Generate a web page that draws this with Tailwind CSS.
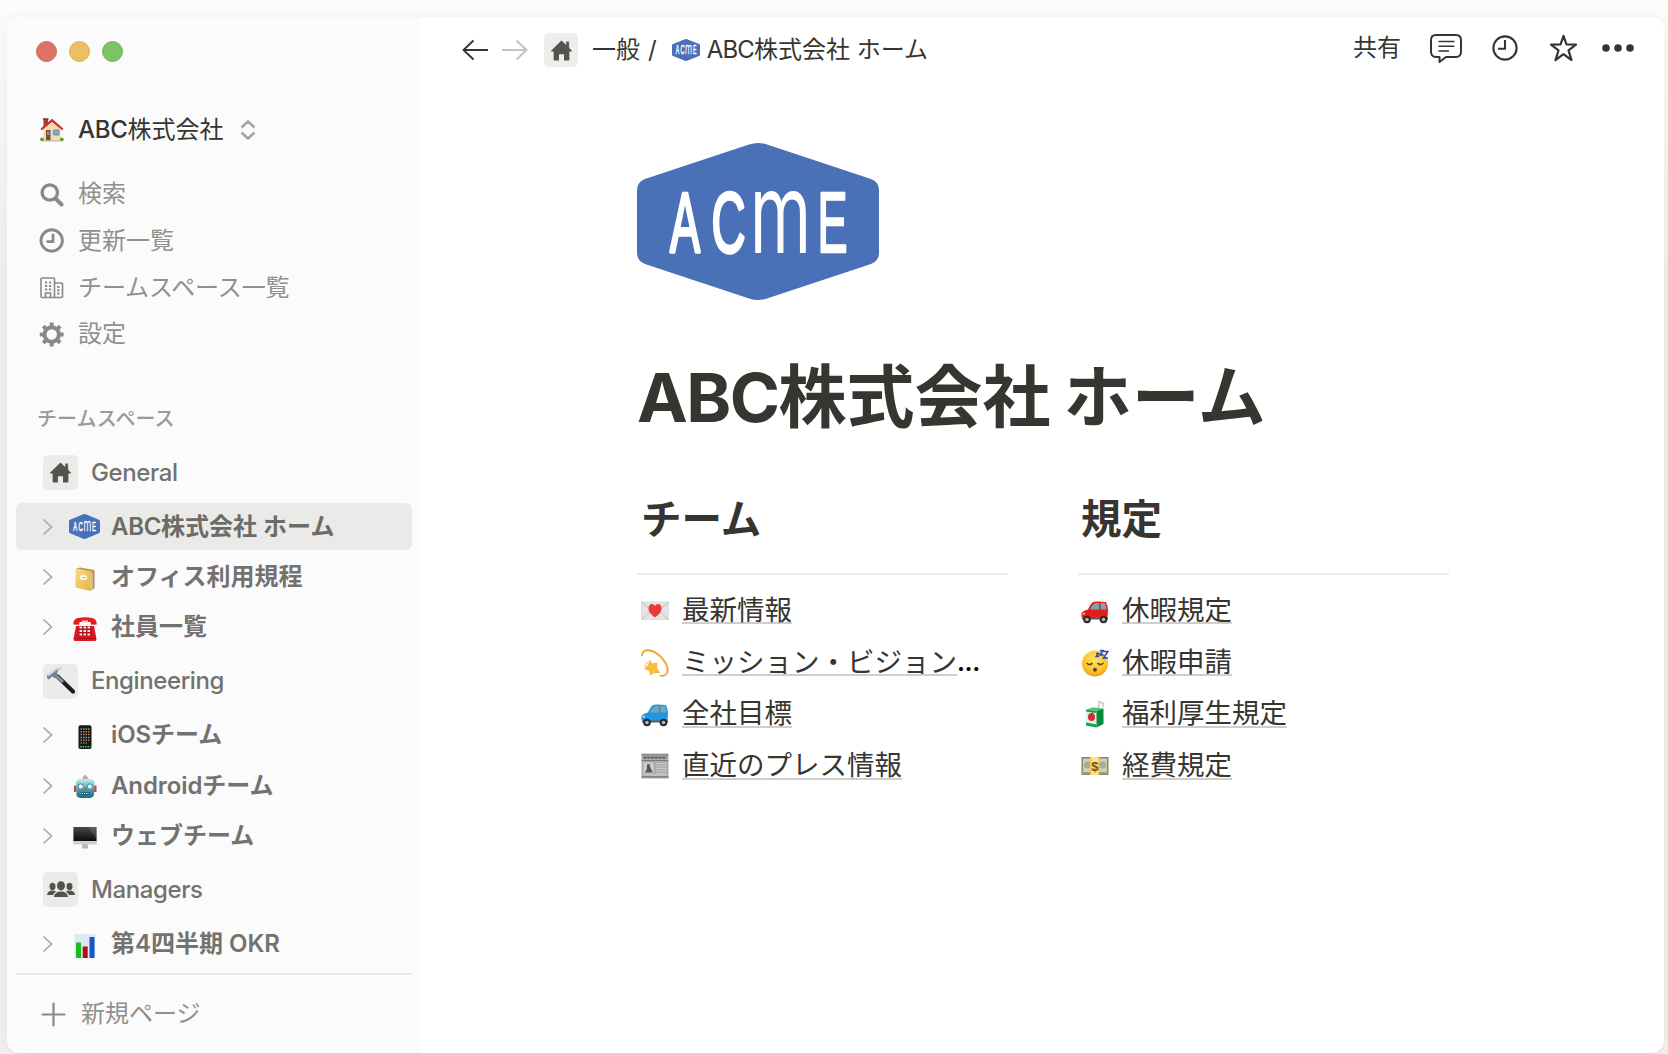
<!DOCTYPE html>
<html lang="ja">
<head>
<meta charset="utf-8">
<title>ABC株式会社 ホーム</title>
<script src="https://cdn.jsdelivr.net/npm/@tailwindcss/browser@4"></script>
</head>
<body class="h-[1054px] w-[1668px] overflow-hidden bg-gradient-to-b from-[#fdfcfa] via-[#efeeec] via-30% to-[#f1f0ee] font-['Inter','Noto_Sans_CJK_JP',sans-serif] text-[#37352f]">
<svg class="absolute size-0">
  <defs>
    <linearGradient id="gBook" x1="0" y1="0" x2="1" y2="1"><stop offset="0" stop-color="#f8dc84"/><stop offset="1" stop-color="#e5b340"/></linearGradient>
    <linearGradient id="gScreen" x1="0" y1="0" x2="0" y2="1"><stop offset="0" stop-color="#484848"/><stop offset="1" stop-color="#0d0d0d"/></linearGradient>
    <linearGradient id="gRobot" x1="0" y1="0" x2="0" y2="1"><stop offset="0" stop-color="#c5f0f4"/><stop offset=".55" stop-color="#4ba3b4"/><stop offset="1" stop-color="#1d6b7e"/></linearGradient>
    <radialGradient id="gFace" cx=".5" cy=".35" r=".65"><stop offset="0" stop-color="#ffe25e"/><stop offset=".7" stop-color="#fcc42c"/><stop offset="1" stop-color="#ee9a1d"/></radialGradient>
  </defs>
  <symbol id="acme" viewBox="0 0 242 157" preserveAspectRatio="none">
    <path d="M112 1.500Q121-1.500 130 1.500L234 36Q242 39 242 47V110Q242 118 234 121L130 155.500Q121 158.500 112 155.500L8 121Q0 118 0 110V47Q0 39 8 36Z" fill="#4a70b8"/>
    <g fill="#fff" stroke="#fff" stroke-linejoin="round" font-family="'Liberation Sans Narrow','Liberation Sans',sans-serif" font-size="85" font-weight="400">
      <text y="108.500" x="33" stroke-width="3.500" textLength="30" lengthAdjust="spacingAndGlyphs">A</text>
      <text y="108.500" x="74.500" stroke-width="3.500" textLength="34" lengthAdjust="spacingAndGlyphs">C</text>
      <text y="108.500" x="113" stroke-width="1.800" font-family="Inter" font-size="108" font-weight="300" textLength="61" lengthAdjust="spacingAndGlyphs">m</text>
      <text y="108.500" x="180.500" stroke-width="2.500" textLength="30" lengthAdjust="spacingAndGlyphs">E</text>
    </g>
  </symbol>
  <symbol id="home" viewBox="0 0 20 20"><path d="M10 .5 0 10.200Q0 11 .8 11H2.500V18.500Q2.500 19.500 3.500 19.500H7.600V13.500H12.400V19.500H16.500Q17.500 19.500 17.500 18.500V11H19.200Q20 11 20 10.200L17.500 7.800V1.500L14.500 1V4.800Z" fill="#55534e"/><path d="M13.800.6 17.500 2.200V7" stroke="#ededeb" stroke-width=".6" fill="none"/></symbol>
  <symbol id="chev" viewBox="0 0 10 16"><path d="M1 1 8.500 8 1 15" fill="none" stroke="#a9a8a5" stroke-width="1.700" stroke-linecap="round"/></symbol>
  <symbol id="car" viewBox="0 0 28 24">
    <path d="M7 9.500Q10 2.500 13 1.800T25 2Q26.500 5 27 10L26.500 18H2Q0 17 .3 14 .6 11 7 9.500Z" fill="currentColor"/>
    <path d="M9 9.500Q11.500 4 14 3.300L18 3V9.500ZM19.500 3H24.300L25.500 9.500H19.500Z" fill="#76a7b5"/>
    <path d="M1 17.500H27V19.500H1Z" fill="#5a5a5a"/>
    <g fill="#292929"><circle cx="6" cy="19.500" r="3.800"/><circle cx="22.500" cy="19.500" r="3.800"/></g>
    <g fill="#b7b7b7"><circle cx="6" cy="19.500" r="1.800"/><circle cx="22.500" cy="19.500" r="1.800"/></g>
    <path d="M1.500 13.500 4 12.500 3.500 14.500H1.500Z" fill="#f3e9c8"/>
  </symbol>
</svg>

<div class="pt-[17px] pl-[7px]">
<div class="flex h-[1036px] w-[1657px] overflow-hidden rounded-[12px] bg-white shadow-[0_0_14px_rgba(15,15,15,0.05),0_1px_0_rgba(15,15,15,0.08)]">

  <aside class="flex w-[414px] shrink-0 flex-col bg-[#fbfbfb]">
    <div class="mt-[24px] ml-[29px] flex gap-3">
      <span class="size-[21px] rounded-full border border-[#cf6a5f] bg-[#dd7267]"></span>
      <span class="size-[21px] rounded-full border border-[#dcb158] bg-[#eac062]"></span>
      <span class="size-[21px] rounded-full border border-[#70b35b] bg-[#7dc264]"></span>
    </div>

    <div class="mt-[44px] ml-[33px] flex h-[48px] items-center">
      <svg class="h-6 w-[24px]" viewBox="0 0 24 24">
        <path d="M3.500 1H8V7L3.500 11Z" fill="#a83a30"/><path d="M3 1H8.500" stroke="#643a35" stroke-width="1.500"/>
        <path d="M3.500 11 12.500 4 20.500 11V22.500H3.500Z" fill="#f3dcb0"/>
        <path d="M1.200 11.500 12 2.300 22.800 11.500" stroke="#c9342b" stroke-width="2.200" fill="none"/>
        <path d="M6 12H10.500V22.500H6Z" fill="#8a4a2e"/><path d="M7 13.500H9.500V17H7Z" fill="#5b9fd0"/>
        <path d="M13.500 12H19V17H13.500Z" fill="#62b3e6" stroke="#917d62" stroke-width=".8"/>
        <path d="M2 22.800H22.500" stroke="#c6b9a0" stroke-width="1.200"/><circle cx="2" cy="21.300" r="1.900" fill="#699b3c"/><circle cx="21.800" cy="21.300" r="1.900" fill="#699b3c"/>
      </svg>
      <span class="ml-[14px] text-[24px] leading-[32px] font-medium whitespace-nowrap"><span class="tracking-[-0.3px]">ABC</span><span class="font-normal">株式会社</span></span>
      <svg class="ml-[16px] h-[22px] w-[18px]" viewBox="0 0 18 22" fill="none" stroke="#a5a4a1" stroke-width="2.600"><path d="M2.500 8.500 9 2.500 15.500 8.500M2.500 13.500 9 19.500 15.500 13.500"/></svg>
    </div>

    <nav class="mt-[17px] ml-[32px] text-[24px] text-[#91908c]">
      <div class="flex h-[46.700px] items-center gap-[14px]">
        <svg class="size-[25px]" viewBox="0 0 25 25" fill="none" stroke="#8a8984"><circle cx="10.800" cy="10.500" r="7.700" stroke-width="3.300"/><path d="M16.500 16.500 22.500 22.500" stroke-width="4" stroke-linecap="round"/></svg>
        <span class="whitespace-nowrap">検索</span>
      </div>
      <div class="flex h-[46.700px] items-center gap-[14px]">
        <svg class="size-[25px]" viewBox="0 0 25 25" fill="none" stroke="#8a8984"><circle cx="12.700" cy="12.500" r="10.700" stroke-width="2.900"/><path d="M14 5.800V13.700H7.500" stroke-width="2.700"/></svg>
        <span class="whitespace-nowrap">更新一覧</span>
      </div>
      <div class="flex h-[46.700px] items-center gap-[14px]">
        <svg class="size-[25px]" viewBox="0 0 25 25" fill="none" stroke="#8a8984" stroke-width="1.600"><path d="M3 22.500Q2 22.500 2 21.500V4Q2 3 3 3H14.500Q15.500 3 15.500 4V22M15.500 8H22.500Q23.500 8 23.500 9V21.500Q23.500 22.500 22.500 22.500H3M6.500 22V18H11.500V22"/><path d="M6 7.500H8.200M10 7.500H12.200M6 11H8.200M10 11H12.200M6 14.500H8.200M10 14.500H12.200M18.200 12H20.500M18.200 15.200H20.500M18.200 18.500H20.500" stroke-width="2"/></svg>
        <span class="tracking-[-0.1px] whitespace-nowrap">チームスペース一覧</span>
      </div>
      <div class="flex h-[46.700px] items-center gap-[14px]">
        <svg class="size-[25px]" viewBox="0 0 25 25" fill="none" stroke="#8a8984"><circle cx="12.700" cy="12.500" r="7.200" stroke-width="4"/><g stroke-width="4"><path d="M12.700 .6V5M12.700 20V24.400M.8 12.500H5M20.400 12.500H24.600M4.300 4.100 7.300 7.100M18.100 17.900 21.100 20.900M4.300 20.900 7.300 17.900M18.100 7.100 21.100 4.100"/></g></svg>
        <span class="whitespace-nowrap">設定</span>
      </div>
    </nav>

    <div class="mt-[46px] ml-[30px] flex h-[30px] items-center text-[20px] font-medium tracking-[0.1px] text-[#9b9a97]">チームスペース</div>

    <div class="mt-[10px] flex flex-col px-[9px] text-[24px] font-medium text-[#73726e]">
      <div class="flex h-[58.100px] items-center pl-[27px]">
        <span class="flex size-[35px] items-center justify-center rounded-[5px] bg-[#ebebea]"><svg class="size-[21px]"><use href="#home"/></svg></span>
        <span class="ml-[13px] tracking-[-0.4px]">General</span>
      </div>
      <div class="flex h-[50.200px] items-center"><div class="flex h-[47px] w-[397px] items-center rounded-[6px] bg-[#eaeae9] pl-[27px]">
        <svg class="h-4 w-[10px]"><use href="#chev"/></svg>
        <svg class="ml-[16px] h-[25px] w-[31px]"><use href="#acme"/></svg>
        <span class="ml-[11px] font-semibold whitespace-nowrap text-[#6d6b66]"><span class="tracking-[-0.3px]">ABC</span>株式会社 ホーム</span>
      </div></div>
      <div class="flex h-[50.200px] items-center pl-[27px]">
        <svg class="h-4 w-[10px]"><use href="#chev"/></svg>
        <svg class="mt-[3px] ml-[20px] size-6" viewBox="0 0 24 24"><path d="M3 1.500 7 .5 21.500 3 18 5Z" fill="#c79a4a"/><path d="M18 5 21.500 3V21L17.500 24Z" fill="#b08b55"/><path d="M19 5.500V22.500" stroke="#f6eed9" stroke-width="1"/><path d="M2.500 1.500 18 5 17.500 24 2.500 20.500Z" fill="url(#gBook)"/><ellipse cx="10.500" cy="10.500" rx="3.800" ry="2.700" fill="#fff4d4"/><path d="M8.500 10.500H12.500" stroke="#b9a675" stroke-width=".7"/></svg>
        <span class="ml-[14px] font-semibold whitespace-nowrap">オフィス利用規程</span>
      </div>
      <div class="flex h-[50.200px] items-center pl-[27px]">
        <svg class="h-4 w-[10px]"><use href="#chev"/></svg>
        <svg class="mt-[3px] ml-[20px] size-6" viewBox="0 0 24 24"><path d="M3 9H21L23.500 22Q23.500 24 22 24H2Q.5 24 .5 22Z" fill="#df1820"/><path d="M.3 7.500Q0 2 5 1 12-.7 19 1 24 2 23.700 7.500L18 7.800 17.500 5H6.500L6 7.800Z" fill="#e61b20"/><path d="M9 3.500H15V5.500H9Z" fill="#f5c7c4"/><path d="M6 9H18L19 19.500H5Z" fill="#b31120"/><g stroke="#fbe9e4" stroke-width="2" stroke-dasharray="2.600 1.400"><path d="M6.500 10.500H17.500M6.500 14H17.500M6.500 17.500H17.500"/></g><path d="M1.500 21.500H22.500" stroke="#a70f18"/></svg>
        <span class="ml-[14px] font-semibold whitespace-nowrap">社員一覧</span>
      </div>
      <div class="flex h-[58.100px] items-center pl-[27px]">
        <span class="flex size-[35px] items-center justify-center rounded-[5px] bg-[#ebebea]"><svg class="size-[29px]" viewBox="0 0 29 29"><path d="M11.500 9.500 27 24.500" stroke="#1e1e1f" stroke-width="4.300" stroke-linecap="round"/><path d="M10 8.500 17 15" stroke="#8296a5" stroke-width="3"/><path d="M1 8.500 7 3.500Q11 .3 16 .8 12 2.500 11 5.500L12 8 9 11.500 6.500 9.500 2.500 12.500Q.5 11 1 8.500Z" fill="#6d8496"/><path d="M2 8.500 8 4Q10.500 2 14 1.200" stroke="#d4e3ed" stroke-width="1.600" fill="none"/></svg></span>
        <span class="ml-[13px] tracking-[-0.4px]">Engineering</span>
      </div>
      <div class="flex h-[50.200px] items-center pl-[27px]">
        <svg class="h-4 w-[10px]"><use href="#chev"/></svg>
        <svg class="mt-[3px] ml-[20px] size-6" viewBox="0 0 24 24"><rect x="5.500" y=".2" width="13" height="23.800" rx="1.800" fill="#171717"/><g stroke-width="1.500" stroke-dasharray="1.500 1"><path d="M7.500 4H17" stroke="#79b84b"/><path d="M7.500 6.800H17" stroke="#9b79b8"/><path d="M7.500 9.600H17" stroke="#da7a2d"/><path d="M7.500 12.400H17" stroke="#4cb3cf"/><path d="M7.500 15.200H17" stroke="#a78b41"/><path d="M7.500 18H15" stroke="#c95061"/><path d="M7 21.800H17.500" stroke="#42c983"/></g></svg>
        <span class="ml-[14px] font-semibold whitespace-nowrap"><span class="tracking-[-0.1px]">iOS</span>チーム</span>
      </div>
      <div class="flex h-[50.200px] items-center pl-[27px]">
        <svg class="h-4 w-[10px]"><use href="#chev"/></svg>
        <svg class="mt-[3px] ml-[20px] size-6" viewBox="0 0 24 24"><path d="M9.500 4 10.500 1.500H14L15 4V6H9.500Z" fill="#7b548f"/><circle cx="12.200" cy="1.800" r="1.800" fill="#f4b43b"/><path d="M1 10.500H3.500V17H1ZM21 10.500H23.500V17H21Z" fill="#c94940"/><path d="M3 7Q4 4 8 3.500H16Q20.500 4 21.500 7L21 20Q20 23 16 23H8.500Q4 23 3.500 20Z" fill="url(#gRobot)"/><g fill="#f6ffff" stroke="#328ca6"><circle cx="7.700" cy="11.500" r="2.600"/><circle cx="16.800" cy="11.500" r="2.600"/></g><path d="M12.200 11.500 14 15H10.400Z" fill="#e65046"/><path d="M8 18.500H16.500" stroke="#174454" stroke-width="2.200"/><path d="M8.500 18.500H16" stroke="#dbeef0" stroke-dasharray="1.500 .8"/></svg>
        <span class="ml-[14px] font-semibold whitespace-nowrap"><span class="tracking-[-0.1px]">Android</span>チーム</span>
      </div>
      <div class="flex h-[50.200px] items-center pl-[27px]">
        <svg class="h-4 w-[10px]"><use href="#chev"/></svg>
        <svg class="mt-[3px] ml-[20px] size-6" viewBox="0 0 24 24"><path d="M9.500 18H14.500L15.300 23.500H8.700Z" fill="#b6b8bd"/><rect y="2" width="24" height="17.500" rx="1" fill="#cfd0d3"/><path d="M.5 2H23.500V16H.5Z" fill="url(#gScreen)"/><path d="M15 2H23.500V14Z" fill="#fff" opacity=".13"/></svg>
        <span class="ml-[14px] font-semibold whitespace-nowrap">ウェブチーム</span>
      </div>
      <div class="flex h-[58.100px] items-center pl-[27px]">
        <span class="flex size-[35px] items-center justify-center rounded-[5px] bg-[#ebebea]"><svg class="h-[17px] w-[28px]" viewBox="0 0 28 17" fill="#55534e"><ellipse cx="14" cy="4.800" rx="4" ry="4.600"/><ellipse cx="5.500" cy="5.400" rx="3" ry="3.600"/><ellipse cx="22.500" cy="5.400" rx="3" ry="3.600"/><path d="M7 16Q7.500 10.500 14 10.500T21 16ZM0 14Q.5 9.500 5.500 9.500 8 9.500 9 10.700 6.500 12 6 14ZM28 14Q27.500 9.500 22.500 9.500 20 9.500 19 10.700 21.500 12 22 14Z"/></svg></span>
        <span class="ml-[13px] tracking-[-0.4px]">Managers</span>
      </div>
      <div class="flex h-[50.200px] items-center pl-[27px]">
        <svg class="h-4 w-[10px]"><use href="#chev"/></svg>
        <svg class="mt-[3px] ml-[20px] size-6" viewBox="0 0 24 24"><path d="M1.500 0H22.500V24H1.500Z" fill="#dde8f2"/><path d="M3 8.500H8V24H3Z" fill="#14bd24"/><path d="M9.700 12.500H14.700V24H9.700Z" fill="#b90d17"/><path d="M16.500 3H21.500V24H16.500Z" fill="#1358c4"/></svg>
        <span class="ml-[14px] font-semibold whitespace-nowrap">第<span>4</span>四半期 <span class="tracking-[-0.1px]">OKR</span></span>
      </div>
    </div>

    <div class="mx-[9px] mt-[4px] h-[2px] w-[397px] bg-[#e9e9e8]"></div>
    <div class="flex h-[78px] items-center pl-[34px] text-[24px] text-[#91908c]">
      <svg class="size-[25px]" viewBox="0 0 25 25" fill="none" stroke="#8a8984" stroke-width="2.200" stroke-linecap="round"><path d="M12.500 1.500V23.500M1.500 12.500H23.500"/></svg>
      <span class="ml-[15px] whitespace-nowrap">新規ページ</span>
    </div>
  </aside>

  <main class="flex min-w-0 flex-1 flex-col">
    <header class="flex h-[66px] items-center pl-[41px] text-[24px]">
      <svg class="h-[22px] w-[26px]" viewBox="0 0 26 22" fill="none" stroke="#37352f" stroke-width="1.900"><path d="M26 11H1.500M11.500 1.500 1.500 11 11.500 20.500"/></svg>
      <svg class="ml-[13.500px] h-[22px] w-[26px]" viewBox="0 0 26 22" fill="none" stroke="#c3c2c1" stroke-width="1.900"><path d="M0 11H24.500M14.500 1.500 24.500 11 14.500 20.500"/></svg>
      <span class="ml-[16.500px] flex size-[34px] items-center justify-center rounded-[5px] bg-[#ededec]"><svg class="size-[21px]"><use href="#home"/></svg></span>
      <span class="ml-[14px] whitespace-nowrap">一般</span>
      <span class="ml-[8px]">/</span>
      <svg class="ml-[15px] h-[22px] w-[28px]"><use href="#acme"/></svg>
      <span class="ml-[7px] whitespace-nowrap"><span class="tracking-[-0.8px]">ABC</span>株式会社 ホーム</span>
      <div class="mb-[5px] ml-auto flex items-center pr-[30px]">
        <span class="whitespace-nowrap">共有</span>
        <svg class="ml-[29px] h-[30px] w-[32px]" viewBox="0 0 32 30" fill="none" stroke="#37352f" stroke-width="2" stroke-linejoin="round"><path d="M6 2H26Q31 2 31 7V18.500Q31 24 26 24H16L9.500 29V24H6Q1 24 1 18.500V7Q1 2 6 2Z"/><path d="M8.500 8.500H24.500M8.500 13.300H24.500M8.500 18H19" stroke-width="1.500"/></svg>
        <svg class="ml-[30px] size-[26px]" viewBox="0 0 26 26" fill="none" stroke="#37352f" stroke-width="2.100"><circle cx="13" cy="13" r="11.600"/><path d="M13 5V13.700H6"/></svg>
        <svg class="ml-[31px] h-[28px] w-[29px]" viewBox="0 0 29 28" fill="none" stroke="#37352f" stroke-width="2.200" stroke-linejoin="round"><path d="M14.500 1.800 17.500 10.500 27 10.700 19.500 16.300 22.500 26 14.500 20.200 6.500 26 9.500 16.300 2 10.700 11.500 10.500Z"/></svg>
        <svg class="ml-[24px] h-[8px] w-[32px]" viewBox="0 0 32 8" fill="#37352f"><circle cx="4" cy="4" r="3.800"/><circle cx="16" cy="4" r="3.800"/><circle cx="28" cy="4" r="3.800"/></svg>
      </div>
    </header>

    <section class="pl-[216px]">
      <svg class="mt-[60px] h-[157px] w-[242px]"><use href="#acme"/></svg>
      <h1 class="mt-[52px] h-[90px] text-[68px] leading-[90px] font-bold whitespace-nowrap [word-spacing:-3px]"><span class="tracking-[-1.5px]">ABC</span>株式会社 ホーム</h1>
      <div class="mt-[49px] grid grid-cols-[371px_371px] gap-x-[70px]">
        <div>
          <h2 class="h-[84px] border-b-2 border-[#ececeb] pt-[3px] pl-[4px] text-[40.500px] leading-[52px] font-bold">チーム</h2>
          <ul class="pt-[10px] text-[27.500px] leading-[34px]">
            <li class="flex h-[51.800px] items-center pl-[4px]">
              <svg class="h-[28px] w-[28px]" viewBox="0 0 28 28"><path d="M.5 5H27.500V22.500H.5Z" fill="#e5e5e5" stroke="#cfcfcf" stroke-width=".6"/><path d="M.5 5 14 17 27.500 5M.5 22.500 10 13.500M27.500 22.500 18 13.500" fill="none" stroke="#bcbcbc"/><path d="M14 20.500Q7.500 16 7.500 11.500 7.800 7 11 7 13.200 7 14 9 14.800 7 17 7 20.200 7 20.500 11.500 20.500 16 14 20.500Z" fill="#e8383d"/></svg>
              <span class="ml-[13px] flex h-[27px] items-center border-b-2 border-[#cfcecd] whitespace-nowrap">最新情報</span></li>
            <li class="flex h-[51.800px] items-center pl-[4px]">
              <svg class="h-[28px] w-[28px]" viewBox="0 0 28 28" fill="none"><path d="M.8 7Q1.500 1 7 1.200 15 2 21 9 28 17 26.500 23 24.500 28 18.500 26.500" stroke="#e9a32c" stroke-width="1.700"/><path d="M2 5Q4 1.500 9 2.500 17 5 22 12T25 23.500" stroke="#f8d66a" stroke-width=".8"/><path d="M8.500 11.500 11.500 15 16 14 15.500 19 18.500 23.500 13 23.500 9.500 26 8.500 21.500 3.500 19.500 7.500 16.500Z" fill="#f8bf31" stroke="#efa526" stroke-width=".7"/><path d="M5 13 6.500 15M3.500 16 5.500 17" stroke="#f4bc3a" stroke-width="1.200"/></svg>
              <span class="ml-[13px] flex h-[27px] items-center border-b-2 border-[#cfcecd] whitespace-nowrap">ミッション・ビジョン</span><span class="text-[24px] font-bold tracking-[-0.4px] text-black">...</span></li>
            <li class="flex h-[51.800px] items-center pl-[4px]">
              <svg class="mt-[2px] h-[24px] w-[28px] text-[#1f95e3]"><use href="#car"/></svg>
              <span class="ml-[13px] flex h-[27px] items-center border-b-2 border-[#cfcecd] whitespace-nowrap">全社目標</span></li>
            <li class="flex h-[51.800px] items-center pl-[4px]">
              <svg class="h-[28px] w-[28px]" viewBox="0 0 28 28"><path d="M.5 1.500H27.500V26.500H.5Z" fill="#acacac"/><path d="M.5 3H27.500M.5 8.500H27.500M.5 24.800H27.500" stroke="#777" stroke-width="1.200"/><path d="M2.500 5.700H25.500" stroke="#555" stroke-width="1.700" stroke-dasharray="3 .7"/><path d="M2.500 10.500H12.500V21.500H2.500Z" fill="#cecece"/><path d="M4 20.500 6 16.500V12.500L8.500 12 9.500 16 12 20.500Z" fill="#555"/><path d="M15 11.500H25.500M15 14H25.500M15 16.500H25.500M15 19H25.500M15 21.500H25.500" stroke="#c9c9c9"/><path d="M2.500 23H25.500" stroke="#d4d4d4"/></svg>
              <span class="ml-[13px] flex h-[27px] items-center border-b-2 border-[#cfcecd] whitespace-nowrap">直近のプレス情報</span></li>
          </ul>
        </div>
        <div>
          <h2 class="h-[84px] border-b-2 border-[#ececeb] pt-[3px] pl-[3px] text-[40.500px] leading-[52px] font-bold">規定</h2>
          <ul class="pt-[10px] text-[27.500px] leading-[34px]">
            <li class="flex h-[51.800px] items-center pl-[3px]">
              <svg class="mt-[2px] h-[24px] w-[28px] text-[#e31c1c]"><use href="#car"/></svg>
              <span class="ml-[13px] flex h-[27px] items-center border-b-2 border-[#cfcecd] whitespace-nowrap">休暇規定</span></li>
            <li class="flex h-[51.800px] items-center pl-[3px]">
              <svg class="h-[28px] w-[28px]" viewBox="0 0 28 28" fill="none"><circle cx="14" cy="14.500" r="13" fill="url(#gFace)"/><path d="M5.500 14Q8.500 17 11.500 14.200M16.500 14.200Q19.500 17 22.500 14" stroke="#64431b" stroke-width="1.600"/><circle cx="14" cy="20.800" r="2" fill="#6a421b"/><path d="M15 4.500H17.500L15.200 7.500H18M18.800 1.500H22L19 6H22.700M22.300 2.500H27L22.500 9H27" stroke="#2448b5" stroke-width="1.500"/></svg>
              <span class="ml-[13px] flex h-[27px] items-center border-b-2 border-[#cfcecd] whitespace-nowrap">休暇申請</span></li>
            <li class="flex h-[51.800px] items-center pl-[3px]">
              <svg class="h-[28px] w-[28px]" viewBox="0 0 28 28"><path d="M17 9 18.500 1.500 22.500 3.500 22 7" fill="none" stroke="#d8c4c6" stroke-width="1.700"/><path d="M5 9.500 12 7.500 22.500 8.500 15.500 11Z" fill="#46c774"/><path d="M5 9.500 15.500 11V27.500L5 25.500Z" fill="#dff0df"/><path d="M5 9.500 15.500 11V13L5 11.500ZM5 22.500 15.500 24.500V27.500L5 25.500Z" fill="#14a24b"/><path d="M15.500 11 22.500 8.500V24L15.500 27.500Z" fill="#078a3f"/><ellipse cx="10.500" cy="17" rx="3.500" ry="3.900" fill="#da2837"/><path d="M10.500 14 12 11.500" stroke="#3d7429"/></svg>
              <span class="ml-[13px] flex h-[27px] items-center border-b-2 border-[#cfcecd] whitespace-nowrap">福利厚生規定</span></li>
            <li class="flex h-[51.800px] items-center pl-[3px]">
              <svg class="h-[28px] w-[28px]" viewBox="0 0 28 28"><path d="M.5 5H27.500V23H.5Z" fill="#85846f"/><path d="M2 6.500H26V20H2Z" fill="#cfcfb8"/><circle cx="6.500" cy="13" r="3.500" fill="#a8ab95"/><circle cx="21.500" cy="13" r="3.500" fill="#a8ab95"/><path d="M.5 21H27.500" stroke="#b5b49e"/><path d="M9 5H18.500V23H9Z" fill="#f1c944"/><path d="M10.500 5H17V23H10.500Z" fill="#f9e58e"/><text x="13.800" y="18.800" text-anchor="middle" font-family="Liberation Sans" font-weight="bold" font-size="13" fill="#66521d">$</text></svg>
              <span class="ml-[13px] flex h-[27px] items-center border-b-2 border-[#cfcecd] whitespace-nowrap">経費規定</span></li>
          </ul>
        </div>
      </div>
    </section>
  </main>
</div>
</div>
</body>
</html>
